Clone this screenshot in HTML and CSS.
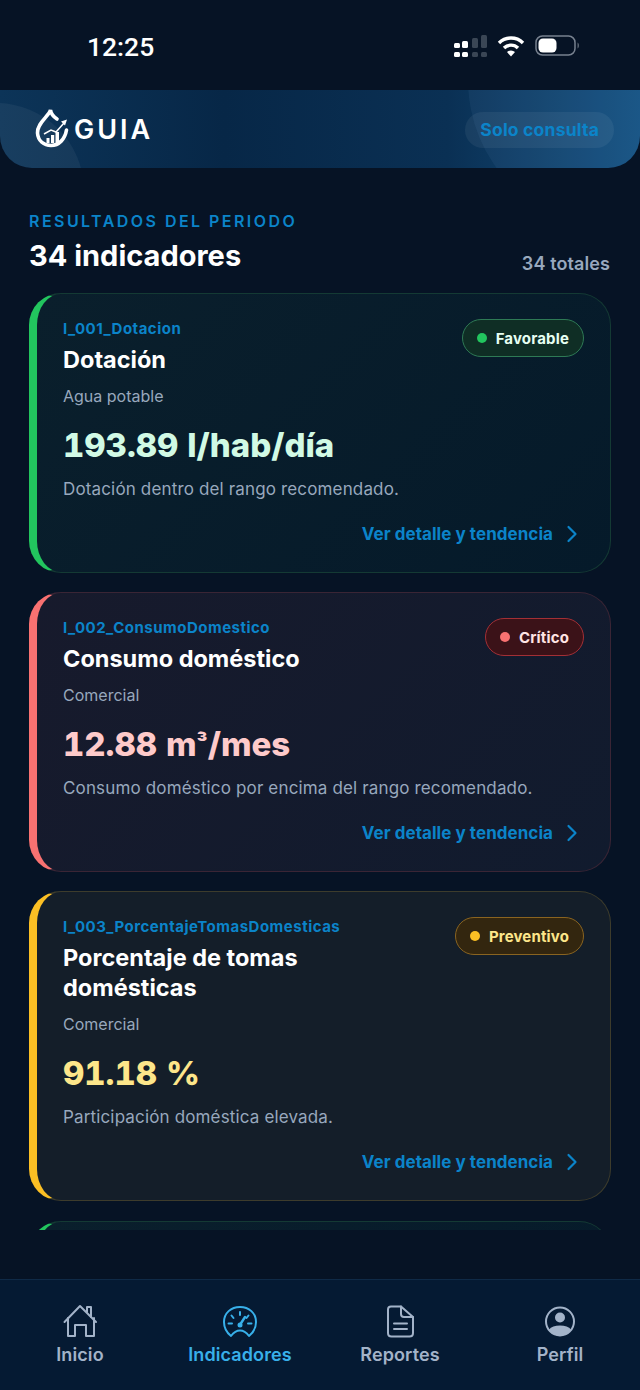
FILE: index.html
```html
<!DOCTYPE html>
<html lang="es">
<head>
    <meta charset="UTF-8">
    <meta name="viewport" content="width=device-width, initial-scale=1.0">
    <title>GUIA - Indicadores</title>
    <link rel="stylesheet" href="styles.css">
</head>

<body>
    <div class="page-container">
        <!-- Status bar -->
        <div class="status-bar">
            <span class="clock">12:25</span>
            <div class="status-icons">
                <svg class="signal" width="33" height="22" viewBox="0 0 33 22">
                    <rect x="0" y="8" width="6" height="5" rx="1.5" fill="#fff"/>
                    <rect x="8" y="6" width="6" height="7" rx="1.5" fill="#fff"/>
                    <rect x="18" y="3" width="6" height="10" rx="1.5" fill="#3a4655"/>
                    <rect x="27" y="0" width="6" height="13" rx="1.5" fill="#3a4655"/>
                    <rect x="0" y="17" width="6" height="5" rx="1.5" fill="#fff"/>
                    <rect x="8" y="17" width="6" height="5" rx="1.5" fill="#fff"/>
                    <rect x="18" y="17" width="6" height="5" rx="1.5" fill="#3a4655"/>
                    <rect x="27" y="17" width="6" height="5" rx="1.5" fill="#3a4655"/>
                </svg>
                <svg class="wifi" width="28" height="22" viewBox="0 0 28 22">
                    <path d="M2 8 A17 17 0 0 1 26 8" fill="none" stroke="#fff" stroke-width="3.4"/>
                    <path d="M7 13 A10 10 0 0 1 21 13" fill="none" stroke="#fff" stroke-width="3.4"/>
                    <path d="M10 17 L14 21.5 L18 17 A6 6 0 0 0 10 17 Z" fill="#fff"/>
                </svg>
                <svg class="battery" width="46" height="22" viewBox="0 0 46 22">
                    <rect x="1" y="1" width="39" height="19" rx="6.5" fill="none" stroke="#77818f" stroke-width="1.5"/>
                    <rect x="3.5" y="3.5" width="18" height="14" rx="4.5" fill="#fff"/>
                    <path d="M42.5 7.5 C44.5 8.5 44.5 12.5 42.5 13.5 Z" fill="#5a6572"/>
                </svg>
            </div>
        </div>

        <!-- Header -->
        <header class="header">
            <span class="header-circle left"></span>
            <span class="header-circle right"></span>
            <div class="logo">
                <svg class="logo-drop" width="36" height="42" viewBox="4 3 36 42">
                    <path d="M27 14 C24 12 21 9 20.500 5 C19 11 7 18 7.500 28 C8 36 14 40.500 21 40.500 C29 40.500 35 34 36.500 25" fill="none" stroke="#fff" stroke-width="3.600" stroke-linecap="round"/>
                    <path d="M14 29 L21 25 L26 27 L34 18" fill="none" stroke="#fff" stroke-width="1.500"/>
                    <path d="M37 14.500 L31 16.500 L35 20.500 Z" fill="#fff"/>
                    <rect x="16.500" y="33" width="3" height="5" fill="#fff"/>
                    <rect x="21" y="30" width="3.200" height="8" fill="#fff"/>
                    <rect x="25.500" y="27" width="3.500" height="11" fill="#fff"/>
                </svg>
                <span class="logo-text">GUIA</span>
            </div>
            <span class="role-pill">Solo consulta</span>
        </header>

        <!-- Main Content -->
        <main class="main-content">
            <div class="section-head">
                <div>
                    <p class="eyebrow">RESULTADOS DEL PERIODO</p>
                    <h1 class="section-title">34 indicadores</h1>
                </div>
                <span class="section-total">34 totales</span>
            </div>

            <div class="card-list">
                <article class="card good">
                    <div class="card-top">
                        <div class="card-names">
                            <p class="card-code">I_001_Dotacion</p>
                            <h2 class="card-title">Dotación</h2>
                        </div>
                        <span class="badge"><i class="dot"></i>Favorable</span>
                    </div>
                    <p class="card-group">Agua potable</p>
                    <p class="card-value">193.89 l/hab/día</p>
                    <p class="card-note">Dotación dentro del rango recomendado.</p>
                    <a class="card-link" href="#">Ver detalle y tendencia
                        <svg width="14" height="20" viewBox="0 0 14 20"><path d="M4.500 3 L11.500 10 L4.500 17" fill="none" stroke="currentColor" stroke-width="2.200" stroke-linecap="round" stroke-linejoin="round"/></svg>
                    </a>
                </article>

                <article class="card bad">
                    <div class="card-top">
                        <div class="card-names">
                            <p class="card-code">I_002_ConsumoDomestico</p>
                            <h2 class="card-title">Consumo doméstico</h2>
                        </div>
                        <span class="badge"><i class="dot"></i>Crítico</span>
                    </div>
                    <p class="card-group">Comercial</p>
                    <p class="card-value">12.88 m<span class="sup">³</span>/mes</p>
                    <p class="card-note">Consumo doméstico por encima del rango recomendado.</p>
                    <a class="card-link" href="#">Ver detalle y tendencia
                        <svg width="14" height="20" viewBox="0 0 14 20"><path d="M4.500 3 L11.500 10 L4.500 17" fill="none" stroke="currentColor" stroke-width="2.200" stroke-linecap="round" stroke-linejoin="round"/></svg>
                    </a>
                </article>

                <article class="card warn">
                    <div class="card-top">
                        <div class="card-names">
                            <p class="card-code">I_003_PorcentajeTomasDomesticas</p>
                            <h2 class="card-title">Porcentaje de tomas domésticas</h2>
                        </div>
                        <span class="badge"><i class="dot"></i>Preventivo</span>
                    </div>
                    <p class="card-group">Comercial</p>
                    <p class="card-value">91.18 %</p>
                    <p class="card-note">Participación doméstica elevada.</p>
                    <a class="card-link" href="#">Ver detalle y tendencia
                        <svg width="14" height="20" viewBox="0 0 14 20"><path d="M4.500 3 L11.500 10 L4.500 17" fill="none" stroke="currentColor" stroke-width="2.200" stroke-linecap="round" stroke-linejoin="round"/></svg>
                    </a>
                </article>

                <article class="card good"></article>
            </div>
        </main>

        <!-- Bottom nav -->
        <nav class="bottom-nav">
            <a class="nav-item" href="#">
                <svg width="36" height="36" viewBox="0 0 36 36" fill="none" stroke="currentColor" stroke-width="2" stroke-linejoin="round" stroke-linecap="round">
                    <path d="M2.500 19 L18 3 L34 19"/>
                    <path d="M25 9 V4 H29 V14"/>
                    <path d="M6 15 V33 H13 V22 H24 V33 H32 V15"/>
                </svg>
                <span>Inicio</span>
            </a>
            <a class="nav-item active" href="#">
                <svg width="36" height="36" viewBox="0 0 36 36" fill="none" stroke="currentColor" stroke-width="2" stroke-linecap="round" stroke-linejoin="round">
                    <path d="M9 33 C4 29 2 24 2 19 C2 10 9 4 18 4 C27 4 34 10 34 19 C34 24 32 29 27 33 C24 29 21 27.500 18 27.500 C15 27.500 12 29 9 33 Z"/>
                    <path d="M18 9 V12 M9.500 12.500 L11.500 15 M26.500 12.500 L24.500 15 M6.500 20.500 H10 M26 20.500 H29.500"/>
                    <path d="M23 14 L18.500 21" stroke-width="2.400"/>
                    <circle cx="18" cy="22" r="2.500" fill="currentColor" stroke="none"/>
                </svg>
                <span>Indicadores</span>
            </a>
            <a class="nav-item" href="#">
                <svg width="36" height="36" viewBox="0 0 36 36" fill="none" stroke="currentColor" stroke-width="2" stroke-linecap="round" stroke-linejoin="round">
                    <path d="M9 3.500 H19 L31 14 V30 C31 32 29.500 33.500 27.500 33.500 H9.500 C7.500 33.500 6 32 6 30 V6.500 C6 4.500 7.500 3.500 9 3.500 Z"/>
                    <path d="M19 3.500 V11 C19 13 20 14 22 14 H31"/>
                    <path d="M12 20.500 H25 M12 26 H25"/>
                </svg>
                <span>Reportes</span>
            </a>
            <a class="nav-item" href="#">
                <svg width="36" height="36" viewBox="0 0 36 36">
                    <circle cx="18" cy="18.500" r="14" fill="none" stroke="currentColor" stroke-width="2"/>
                    <circle cx="18" cy="14.500" r="5" fill="currentColor"/>
                    <path d="M7 26.500 C9 24 13 22.500 18 22.500 C23 22.500 27 24 29 26.500 C27 30.500 23 32.500 18 32.500 C13 32.500 9 30.500 7 26.500 Z" fill="currentColor"/>
                </svg>
                <span>Perfil</span>
            </a>
        </nav>
    </div>
</body>
</html>
```

FILE: styles.css
```css
:root {
    --background-color: #061325;
    --accent-color: #0b84c9;
    --muted-color: #98a8bd;
    --text-color: #ffffff;
}

* {
    margin: 0;
    padding: 0;
    box-sizing: border-box;
}

body {
    font-family: Inter, "Noto Sans", sans-serif;
    background-color: var(--background-color);
    color: var(--text-color);
}

.page-container {
    display: flex;
    flex-direction: column;
    width: 640px;
    height: 1390px;
    overflow: hidden;
}

/* Status bar */
.status-bar {
    display: flex;
    align-items: center;
    justify-content: space-between;
    height: 90px;
    padding: 2px 59px 0 87px;
    flex-shrink: 0;
}

.clock {
    font-size: 26.500px;
    font-weight: 500;
    font-family: Roboto, Inter, sans-serif;
}

.status-icons {
    display: flex;
    align-items: center;
    gap: 10px;
}

/* Header */
.header {
    position: relative;
    display: flex;
    align-items: center;
    justify-content: space-between;
    height: 78px;
    padding: 0 26px 0 34px;
    flex-shrink: 0;
    overflow: hidden;
    background: linear-gradient(90deg, #0c3458 0%, #072747 35%, #0a3054 70%, #145080 100%);
    border-radius: 0 0 32px 32px;
}

.header-circle {
    position: absolute;
    border-radius: 50%;
    background: rgba(255, 255, 255, 0.05);
}

.header-circle.left {
    left: -92px;
    top: 13px;
    width: 176px;
    height: 176px;
}

.header-circle.right {
    left: 468px;
    top: -160px;
    width: 300px;
    height: 300px;
    background: rgba(150, 210, 255, 0.06);
}

.logo {
    position: relative;
    display: flex;
    align-items: center;
    gap: 4px;
}

.logo-text {
    font-size: 27px;
    font-weight: 600;
    letter-spacing: 3px;
    line-height: 30px;
    padding-top: 2px;
}

.role-pill {
    position: relative;
    display: flex;
    align-items: center;
    height: 36px;
    padding: 0 15px;
    margin-top: 1px;
    font-size: 17.500px;
    font-weight: 700;
    letter-spacing: 0.2px;
    color: var(--accent-color);
    background: rgba(255, 255, 255, 0.06);
    border-radius: 18px;
}

/* Section */
.main-content {
    padding: 43px 29px 0;
}

.section-head {
    display: flex;
    align-items: flex-end;
    justify-content: space-between;
    margin-bottom: 19px;
}

.eyebrow {
    font-size: 16px;
    font-weight: 600;
    letter-spacing: 2.450px;
    line-height: 20px;
    color: var(--accent-color);
}

.section-title {
    font-size: 29px;
    font-weight: 700;
    line-height: 36px;
    margin-top: 7px;
}

.section-total {
    font-size: 18px;
    font-weight: 600;
    letter-spacing: 0.1px;
    color: var(--muted-color);
    padding-right: 1px;
}

/* Cards */
.card-list {
    display: flex;
    flex-direction: column;
    gap: 19px;
    height: 937px;
    overflow: hidden;
}

.card {
    flex-shrink: 0;
    padding: 25px 26px 26px 26px;
    border: 1px solid;
    border-left-width: 8px;
    border-radius: 32px;
}

.card:last-child {
    height: 200px;
    margin-top: 1px;
}

.card.good {
    border-color: #143a34;
    border-left-color: #22c55e;
    background: linear-gradient(135deg, #0a1f2c 0%, #051a2a 100%);
}

.card.bad {
    border-color: #3a2535;
    border-left-color: #f87171;
    background: linear-gradient(135deg, #171a2c 0%, #111b2e 100%);
}

.card.warn {
    border-color: #3d3c2c;
    border-left-color: #fbbf24;
    background: #141e29;
}

.card-top {
    display: flex;
    align-items: flex-start;
    justify-content: space-between;
    gap: 20px;
}

.card-code {
    font-size: 15px;
    font-weight: 700;
    line-height: 20px;
    letter-spacing: 0.5px;
    color: var(--accent-color);
}

.card-title {
    max-width: 340px;
    font-size: 23.500px;
    font-weight: 700;
    line-height: 30px;
    margin-top: 6px;
}

.card-group {
    font-size: 16px;
    line-height: 20px;
    margin-top: 11px;
    color: var(--muted-color);
}

.card-value {
    font-size: 33px;
    font-weight: 800;
    line-height: 40px;
    margin-top: 19px;
    font-variant-numeric: tabular-nums;
}

.sup {
    font-size: 0.7em;
    vertical-align: 5px;
    line-height: 0;
}

.good .card-value {
    color: #d1fae5;
}

.bad .card-value {
    color: #fecaca;
}

.warn .card-value {
    color: #fde68a;
}

.card-note {
    font-size: 17px;
    letter-spacing: 0.15px;
    line-height: 24px;
    margin-top: 12px;
    color: var(--muted-color);
}

.card-link {
    display: flex;
    align-items: center;
    justify-content: flex-end;
    gap: 11px;
    margin-top: 21px;
    padding-right: 6px;
    font-size: 17px;
    font-weight: 700;
    letter-spacing: 0.05px;
    line-height: 24px;
    color: var(--accent-color);
    text-decoration: none;
}

.badge {
    display: flex;
    align-items: center;
    gap: 9px;
    flex-shrink: 0;
    height: 38px;
    padding: 0 14px;
    font-size: 15px;
    font-weight: 700;
    letter-spacing: 0.15px;
    white-space: nowrap;
    border: 1.500px solid;
    border-radius: 19px;
}

.dot {
    width: 10px;
    height: 10px;
    border-radius: 50%;
}

.good .badge {
    color: #e6fff2;
    border-color: #2e7a55;
    background: #0f2e25;
}

.good .dot {
    background: #22c55e;
}

.bad .badge {
    color: #ffe4e4;
    border-color: #a32f35;
    background: #3b1218;
}

.bad .dot {
    background: #f87171;
}

.warn .badge {
    color: #fde68a;
    border-color: #8a6420;
    background: #33260f;
}

.warn .dot {
    background: #fbbf24;
}

/* Bottom nav */
.bottom-nav {
    display: grid;
    grid-template-columns: repeat(4, 1fr);
    margin-top: auto;
    height: 111px;
    padding-top: 23px;
    flex-shrink: 0;
    background: #051a33;
    border-top: 1px solid #0f2a47;
}

.nav-item {
    display: flex;
    flex-direction: column;
    align-items: center;
    gap: 5px;
    font-size: 18px;
    font-weight: 600;
    letter-spacing: 0.1px;
    color: #a3b3c9;
    text-decoration: none;
}

.nav-item.active {
    color: #38b0ea;
}
```
